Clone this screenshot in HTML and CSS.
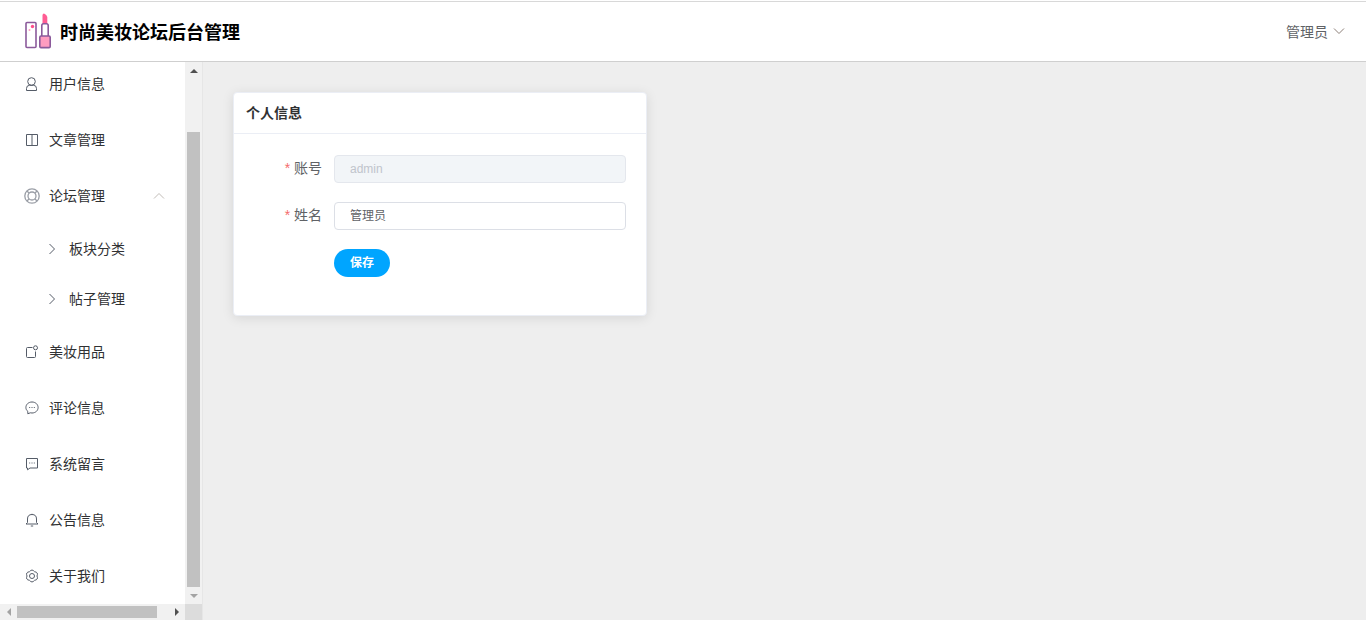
FILE: index.html
```html
<!DOCTYPE html>
<html lang="zh-CN">
<head>
    <meta charset="UTF-8">
    <title>时尚美妆论坛后台管理</title>
    <link rel="stylesheet" href="styles.css">
</head>
<body>

    <!-- 顶部 -->
    <div class="top-edge"></div>
    <header class="top-bar">
        <div class="brand">
            <svg class="logo" width="26" height="36" viewBox="0 0 26 36">
                <rect x="1" y="9.5" width="10" height="25" rx="1" fill="#fff" stroke="#8b5a9b" stroke-width="1.6"/>
                <circle cx="7.5" cy="13.5" r="1.7" fill="#ff4f8b"/>
                <circle cx="4.5" cy="17" r="1" fill="#ff9cc0"/>
                <path d="M17.5 11V2.5Q17.5 .5 19 0.5Q21.8 1.5 22.3 4V11Z" fill="#ff5c93"/>
                <path d="M16.8 23V12.5Q16.8 10.8 18.5 10.8H21.5Q23.2 10.8 23.2 12.5V23" fill="#fff" stroke="#8b5a9b" stroke-width="1.6"/>
                <rect x="14.8" y="23" width="10.4" height="11.6" rx="1.2" fill="#ff9cc0" stroke="#8b5a9b" stroke-width="1.6"/>
            </svg>
            <span class="brand-name">时尚美妆论坛后台管理</span>
        </div>
        <div class="user-menu">
            <span>管理员</span>
            <svg class="icon" width="12" height="12" viewBox="0 0 12 12"><path d="M1 3.5L6 8.5L11 3.5" class="line"/></svg>
        </div>
    </header>

    <div class="layout">
        <aside class="side">
            <div class="side-view">
                <ul class="menu">
                    <li class="menu-item first">
                        <svg class="icon" width="14" height="14" viewBox="0 0 14 14"><circle cx="6.5" cy="4.5" r="3.8" class="line"/><path d="M1.5 13.5V11.5Q1.5 8.3 4.5 8.3H8.5Q11.5 8.3 11.5 11.5V13.5Z" class="line"/></svg>
                        <span>用户信息</span>
                    </li>
                    <li class="menu-item">
                        <svg class="icon" width="14" height="14" viewBox="0 0 14 14"><path d="M1.5 1.5H12.5V12.5H1.5ZM7 1.5V12.5" class="line"/></svg>
                        <span>文章管理</span>
                    </li>
                    <li class="menu-item open">
                        <svg class="icon big" width="16" height="16" viewBox="0 0 16 16"><circle cx="8" cy="8" r="7.2" class="line soft"/><circle cx="8" cy="8" r="4" class="line soft"/><path d="M3 3L5.2 5.2M13 3L10.8 5.2M3 13L5.2 10.8M13 13L10.8 10.8" class="line soft"/></svg>
                        <span>论坛管理</span>
                        <svg class="caret" width="12" height="12" viewBox="0 0 12 12"><path d="M1 8.5L6 3.5L11 8.5" class="line pale"/></svg>
                    </li>
                    <li class="sub-item">
                        <svg class="icon" width="8" height="12" viewBox="0 0 8 12"><path d="M1.5 1L6.5 6L1.5 11" class="line"/></svg>
                        <span>板块分类</span>
                    </li>
                    <li class="sub-item">
                        <svg class="icon" width="8" height="12" viewBox="0 0 8 12"><path d="M1.5 1L6.5 6L1.5 11" class="line"/></svg>
                        <span>帖子管理</span>
                    </li>
                    <li class="menu-item">
                        <svg class="icon" width="14" height="14" viewBox="0 0 14 14"><path d="M7.5 2.5H2.5Q1.5 2.5 1.5 3.5V11.5Q1.5 12.5 2.5 12.5H9.5Q10.5 12.5 10.5 11.5V6.5" class="line"/><circle cx="10.5" cy="2.8" r="2" class="line"/></svg>
                        <span>美妆用品</span>
                    </li>
                    <li class="menu-item">
                        <svg class="icon" width="14" height="14" viewBox="0 0 14 14"><path d="M7 1C3.5 1 .9 3.4 .9 6.5C.9 8.1 1.6 9.4 2.8 10.4V12.8L5.3 11.8C5.8 11.9 6.4 12 7 12C10.5 12 13.1 9.6 13.1 6.5C13.1 3.4 10.5 1 7 1Z" class="line"/><path d="M4.2 6.5H5.2M6.5 6.5H7.5M8.8 6.5H9.8" class="line"/></svg>
                        <span>评论信息</span>
                    </li>
                    <li class="menu-item">
                        <svg class="icon" width="14" height="14" viewBox="0 0 14 14"><path d="M1.5 1.5H12.5V11H5L2.5 12.8V11H1.5Z" class="line"/><path d="M4.2 6H5.2M6.5 6H7.5M8.8 6H9.8" class="line"/></svg>
                        <span>系统留言</span>
                    </li>
                    <li class="menu-item">
                        <svg class="icon" width="14" height="14" viewBox="0 0 14 14"><path d="M1 11H13L11.5 9.5V6Q11.5 1.5 7 1.5Q2.5 1.5 2.5 6V9.5ZM5.8 13H8.2M7 .8V1.5" class="line"/></svg>
                        <span>公告信息</span>
                    </li>
                    <li class="menu-item">
                        <svg class="icon" width="14" height="14" viewBox="0 0 14 14"><path d="M12 7Q13.6 10.8 9.5 11.3Q7 14.6 4.5 11.3Q.4 10.8 2 7Q.4 3.2 4.5 2.7Q7 -.6 9.5 2.7Q13.6 3.2 12 7Z" class="line"/><circle cx="7" cy="7" r="2.5" class="line"/></svg>
                        <span>关于我们</span>
                    </li>
                </ul>
                <div class="bar-y">
                    <i class="arrow up"></i>
                    <div class="bar-y-track"><div class="bar-y-thumb"></div></div>
                    <i class="arrow down"></i>
                </div>
            </div>
            <div class="bar-x">
                <i class="arrow left"></i>
                <div class="bar-x-track"><div class="bar-x-thumb"></div></div>
                <i class="arrow right"></i>
                <div class="bar-corner"></div>
            </div>
        </aside>

        <main class="content">
            <section class="card">
                <div class="card-header"><span>个人信息</span></div>
                <form class="card-body">
                    <div class="form-row">
                        <label class="form-label"><em>*</em> 账号</label>
                        <input class="form-input" type="text" value="admin" disabled>
                    </div>
                    <div class="form-row">
                        <label class="form-label"><em>*</em> 姓名</label>
                        <input class="form-input" type="text" value="管理员">
                    </div>
                    <div class="form-row">
                        <button class="save-btn" type="button">保存</button>
                    </div>
                </form>
            </section>
        </main>
    </div>

</body>
</html>
```

FILE: styles.css
```css
* {
    box-sizing: border-box;
}

html, body {
    height: 100%;
}

body {
    margin: 0;
    display: flex;
    flex-direction: column;
    overflow: hidden;
    font-family: "Liberation Sans", "Noto Sans CJK SC", sans-serif;
    font-size: 14px;
    color: #333;
    background-color: #eee;
}

.top-edge {
    height: 2px;
    flex-shrink: 0;
    background-color: #fff;
    border-bottom: 1px solid #d8d8d8;
}

.top-bar {
    height: 60px;
    flex-shrink: 0;
    display: flex;
    justify-content: space-between;
    align-items: center;
    padding: 0 21px 1px 25px;
    background-color: #fff;
    border-bottom: 1px solid #cfcfcf;
}

.brand {
    display: flex;
    align-items: center;
}

.logo {
    margin-top: -1px;
}

.brand-name {
    margin-left: 9px;
    font-size: 18px;
    font-weight: bold;
    color: #000;
}

.user-menu {
    display: flex;
    align-items: center;
    gap: 5px;
    color: #606266;
}

.line {
    fill: none;
    stroke: #555c68;
    stroke-width: 1;
}

.user-menu .line {
    stroke: #8d7f78;
}

.line.soft {
    stroke: #9a9ea6;
    stroke-width: 1.3;
}

.line.pale {
    stroke: #c2bdb8;
}

.layout {
    flex: 1;
    display: flex;
    min-height: 0;
}

.side {
    width: 203px;
    flex-shrink: 0;
    display: flex;
    flex-direction: column;
    border-right: 1px solid #e6e6e6;
}

.side-view {
    flex: 1;
    display: flex;
    min-height: 0;
}

.menu {
    flex: 1;
    margin: 0;
    padding: 0;
    list-style: none;
    overflow: hidden;
    background-color: #fff;
}

.menu-item, .sub-item {
    display: flex;
    align-items: center;
    color: #303133;
    white-space: nowrap;
}

.menu-item span, .sub-item span {
    padding-bottom: 2px;
}

.menu-item {
    height: 56px;
    padding-left: 25px;
}

.menu-item.first {
    margin-top: -6px;
}

.menu-item .icon {
    width: 14px;
    margin-right: 10px;
}

.menu-item .icon.big {
    width: 16px;
    margin-left: -1px;
    margin-right: 9px;
}

.caret {
    margin-left: 48px;
}

.sub-item {
    height: 50px;
    padding-left: 48px;
}

.sub-item .icon {
    margin-right: 13px;
}

.bar-y {
    width: 17px;
    display: flex;
    flex-direction: column;
    background-color: #f1f1f1;
}

.bar-y-track {
    flex: 1;
    padding-top: 53px;
    display: flex;
}

.bar-y-thumb {
    flex: 1;
    margin: 0 2px;
    background-color: #c1c1c1;
}

.bar-x {
    height: 16px;
    flex-shrink: 0;
    display: flex;
    background-color: #f1f1f1;
}

.bar-x-track {
    flex: 1;
    display: flex;
    padding: 2px 0;
}

.bar-x-thumb {
    width: 140px;
    background-color: #c1c1c1;
}

.bar-corner {
    width: 17px;
    background-color: #dcdcdc;
}

/* стрелки скроллбаров */
.arrow {
    flex-shrink: 0;
    display: flex;
    align-items: center;
    justify-content: center;
    width: 17px;
    height: 17px;
}

.arrow::before {
    content: "";
    border: 4px solid transparent;
}

.arrow.up::before {
    border-top-width: 0;
    border-bottom: 4px solid #505050;
}

.arrow.down::before {
    border-bottom-width: 0;
    border-top: 4px solid #a3a3a3;
}

.arrow.left {
    height: 16px;
}

.arrow.left::before {
    border-left-width: 0;
    border-right: 4px solid #a3a3a3;
}

.arrow.right {
    height: 16px;
}

.arrow.right::before {
    border-right-width: 0;
    border-left: 4px solid #505050;
}

.content {
    flex: 1;
    min-width: 0;
    padding: 30px;
}

.card {
    width: 414px;
    height: 224px;
    background-color: #fff;
    border: 1px solid #ebeef5;
    border-radius: 4px;
    box-shadow: 0 2px 12px rgba(0, 0, 0, 0.1);
}

.card-header {
    height: 41px;
    padding: 0 12px;
    display: flex;
    align-items: center;
    font-weight: bold;
    color: #303133;
    border-bottom: 1px solid #ebeef5;
}

.card-header span {
    padding-bottom: 3px;
}

.card-body {
    padding: 21px 20px 0 0;
}

.form-row {
    display: flex;
    align-items: center;
    justify-content: flex-end;
    gap: 12px;
    margin-bottom: 19px;
}

.form-label {
    flex: 1;
    padding-bottom: 5px;
    text-align: right;
    color: #606266;
}

.form-label em {
    font-style: normal;
    color: #f56c6c;
}

.form-input {
    width: 292px;
    height: 28px;
    padding: 0 15px 3px;
    font-family: inherit;
    font-size: 12px;
    color: #606266;
    background-color: #fff;
    border: 1px solid #dcdfe6;
    border-radius: 4px;
    outline: none;
}

.form-input:disabled {
    padding-bottom: 0;
    color: #c0c4cc;
    background-color: #f2f5f8;
    border-color: #e4e7ed;
}

.save-btn {
    width: 56px;
    height: 28px;
    margin-right: 236px;
    padding: 0 0 3px;
    font-family: inherit;
    font-size: 12px;
    font-weight: bold;
    color: #fff;
    background-color: #00a5ff;
    border: none;
    border-radius: 14px;
}
```
